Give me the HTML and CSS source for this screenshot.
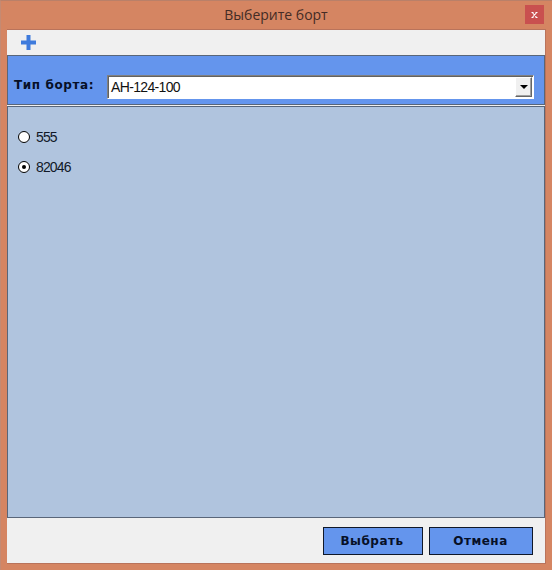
FILE: index.html
```html
<!DOCTYPE html>
<html lang="ru">
<head>
<meta charset="utf-8">
<title>Выберите борт</title>
<link rel="stylesheet" href="styles.css">
</head>
<body>
<div class="window">
  <header class="titlebar">
    <h1 class="title">Выберите борт</h1>
    <button class="close" aria-label="Закрыть"><svg width="7" height="8" viewBox="0 0 7 8"><path d="M1.3 1.5 5.7 6.5M5.7 1.5 1.3 6.5M.5 1.5h2M4.5 1.5h2M.5 6.5h2M4.5 6.5h2" stroke="#fff" stroke-width="1.1"/></svg></button>
  </header>
  <main class="client">
    <div class="toolbar">
      <svg width="16" height="16" viewBox="0 0 16 16"><path d="M6.5 1h4v5.5H16v4h-5.5V16h-4v-5.5H1v-4h5.5z" fill="#3f7bdc"/></svg>
    </div>
    <div class="filter">
      <span class="label">Тип борта:</span>
      <div class="combo">
        <span class="value">АН-124-100</span>
        <span class="drop"><svg width="8" height="4" viewBox="0 0 8 4"><path d="M0 0h8L4 4z" fill="#000"/></svg></span>
      </div>
    </div>
    <div class="list">
      <div class="option"><span class="radio"></span><span class="number">555</span></div>
      <div class="option"><span class="radio checked"></span><span class="number">82046</span></div>
    </div>
    <footer class="actions">
      <button class="btn choose">Выбрать</button>
      <button class="btn cancel">Отмена</button>
    </footer>
  </main>
</div>
</body>
</html>
```
FILE: styles.css
```css
* { box-sizing: border-box; }
body { margin: 0; }
button { margin: 0; padding: 0; font: inherit; }
svg { display: block; }

.window {
  width: 552px;
  height: 570px;
  padding: 0 6px 6px;
  background: #d58562;
  border-top: 1px solid #b98069;
  border-left: 1px solid #c58a72;
  font-family: "Liberation Sans", sans-serif;
}
.titlebar {
  display: grid;
  grid-template-columns: 1fr 21px;
  height: 28px;
  align-items: start;
}
.title {
  margin: 4px 0 0 20px;
  font: 400 14px/20px "Open Sans", sans-serif;
  text-align: center;
  color: #442c25;
}
.close {
  display: grid;
  place-items: center;
  width: 19px;
  height: 19px;
  margin-top: 4px;
  border: 0;
  background: #c9504f;
}
.client {
  display: flex;
  flex-direction: column;
  width: 539px;
  height: 535px;
  border: 1px solid #b9735b;
  border-left: 0;
  background: #f0f0f0;
}
.toolbar {
  height: 25px;
  padding: 4px 0 0 13px;
}
.filter {
  display: flex;
  height: 50px;
  padding: 19px 10px 0 6px;
  background: #6495ed;
  border: 1px solid #596679;
}
.label {
  width: 93px;
  padding-top: 1px;
  font: 700 12px/18px "DejaVu Sans", sans-serif;
  letter-spacing: .6px;
  white-space: nowrap;
  color: #071027;
}
.combo {
  display: flex;
  flex: 1;
  height: 24px;
  background: #fff;
  border: 1px solid #808080;
  border-right-color: #fff;
  border-bottom-color: #fff;
  box-shadow: inset 1px 1px #626262;
}
.value {
  flex: 1;
  padding-left: 3px;
  font-size: 14px;
  line-height: 23px;
  letter-spacing: -.65px;
  color: #111;
}
.drop {
  display: grid;
  place-items: center;
  width: 17px;
  height: 20px;
  margin: 1px 1px 0 0;
  background: #f0f0f0;
  border: 1px solid #fff;
  border-right-color: #666;
  border-bottom-color: #666;
  box-shadow: inset -1px -1px #a0a0a0;
}
.list {
  flex: 1;
  margin-top: 1px;
  padding: 20px 10px;
  background: #b0c4de;
  border: 1px solid #596679;
}
.option {
  display: flex;
  align-items: center;
  height: 20px;
  margin-bottom: 10px;
}
.radio {
  display: grid;
  place-items: center;
  width: 12px;
  height: 12px;
  margin-right: 6px;
  border: 1px solid #000;
  border-radius: 50%;
  background: #fff;
}
.checked::after {
  content: "";
  width: 4px;
  height: 4px;
  border-radius: 50%;
  background: #000;
}
.number {
  font-size: 14px;
  line-height: 20px;
  letter-spacing: -.85px;
  color: #111827;
}
.actions {
  display: flex;
  justify-content: flex-end;
  gap: 6px;
  height: 45px;
  padding: 9px 12px 0 0;
}
.btn {
  height: 28px;
  background: #6495ed;
  border: 1px solid #101828;
  font: 700 12px/26px "DejaVu Sans", sans-serif;
  letter-spacing: .5px;
  color: #071027;
}
.choose { width: 100px; padding-right: 2px; }
.cancel { width: 104px; padding-right: 1px; }
```
